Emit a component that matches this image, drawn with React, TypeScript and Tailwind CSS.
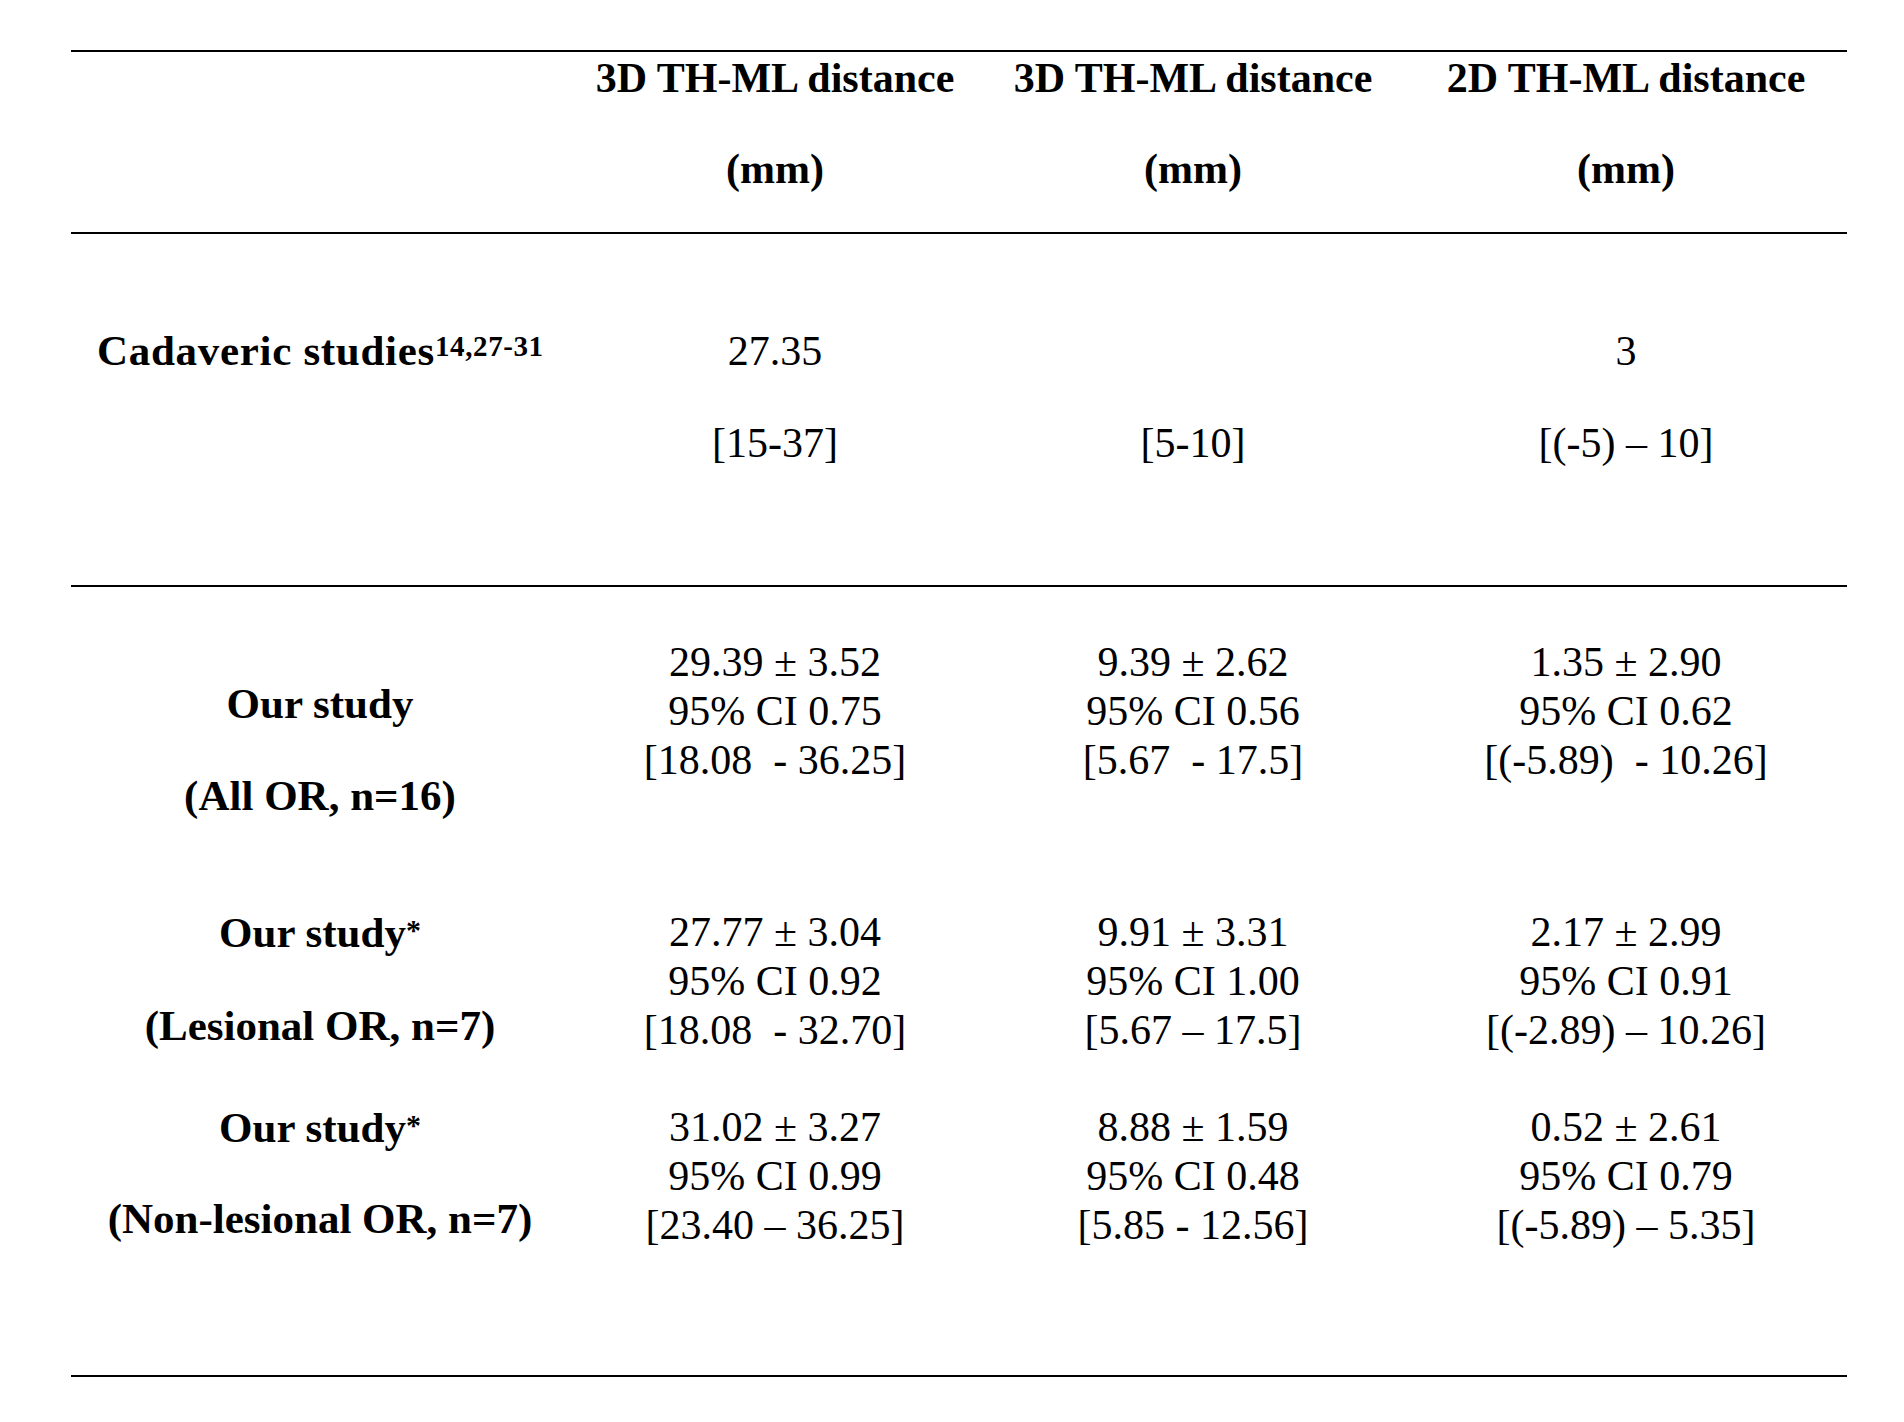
import React from "react";

const headers = ["3D TH-ML distance", "3D TH-ML distance", "2D TH-ML distance"];

type BodyRow = {
  label: string;
  star: boolean;
  sub: string;
  h: string;
  pt: string;
  labelPt: string;
  labelGap: string;
  cells: string[][];
};

const bodyRows: BodyRow[] = [
  {
    label: "Our study",
    star: false,
    sub: "(All OR, n=16)",
    h: "h-[283px]",
    pt: "pt-[51px]",
    labelPt: "pt-[92px]",
    labelGap: "gap-[43px]",
    cells: [
      ["29.39 ± 3.52", "95% CI 0.75", "[18.08  - 36.25]"],
      ["9.39 ± 2.62", "95% CI 0.56", "[5.67  - 17.5]"],
      ["1.35 ± 2.90", "95% CI 0.62", "[(-5.89)  - 10.26]"],
    ],
  },
  {
    label: "Our study",
    star: true,
    sub: "(Lesional OR, n=7)",
    h: "h-[195px]",
    pt: "pt-[38px]",
    labelPt: "pt-[38px]",
    labelGap: "gap-[44px]",
    cells: [
      ["27.77 ± 3.04", "95% CI 0.92", "[18.08  - 32.70]"],
      ["9.91 ± 3.31", "95% CI 1.00", "[5.67 – 17.5]"],
      ["2.17 ± 2.99", "95% CI 0.91", "[(-2.89) – 10.26]"],
    ],
  },
  {
    label: "Our study",
    star: true,
    sub: "(Non-lesional OR, n=7)",
    h: "h-[310px]",
    pt: "pt-[38px]",
    labelPt: "pt-[38px]",
    labelGap: "gap-[42px]",
    cells: [
      ["31.02 ± 3.27", "95% CI 0.99", "[23.40 – 36.25]"],
      ["8.88 ± 1.59", "95% CI 0.48", "[5.85 - 12.56]"],
      ["0.52 ± 2.61", "95% CI 0.79", "[(-5.89) – 5.35]"],
    ],
  },
];

const cols = "grid grid-cols-[498px_412px_424px_442px]";

export default function App() {
  return (
    <div className="bg-white w-[1904px] min-h-[1422px] pt-[50px] font-['Liberation_Serif',serif] text-black">
      <div className="ml-[71px] w-[1776px] border-t-2 border-black">
        {/* Header */}
        <div className={`${cols} h-[182px] border-b-2 border-black`}>
          <div />
          {headers.map((h, i) => (
            <div
              key={i}
              className="flex flex-col items-center pt-[2px] gap-[43px] font-bold text-[42px] leading-[48px] whitespace-nowrap"
            >
              <div>{h}</div>
              <div>(mm)</div>
            </div>
          ))}
        </div>

        {/* Cadaveric studies */}
        <div className={`${cols} h-[353px] border-b-2 border-black`}>
          <div className="pt-[93px] pl-[26px] font-bold text-[43px] leading-[48px] whitespace-nowrap">
            <span className="tracking-[0.7px]">Cadaveric studies</span>
            <span className="text-[29px] tracking-[0.6px] leading-none align-[9px]">14,27-31</span>
          </div>
          <div className="flex flex-col items-center pt-[93px] gap-[44px] text-[42px] leading-[48px]">
            <div>27.35</div>
            <div>[15-37]</div>
          </div>
          <div className="flex flex-col items-center pt-[93px] gap-[44px] text-[42px] leading-[48px]">
            <div className="h-[48px]" />
            <div>[5-10]</div>
          </div>
          <div className="flex flex-col items-center pt-[93px] gap-[44px] text-[42px] leading-[48px]">
            <div>3</div>
            <div>[(-5) – 10]</div>
          </div>
        </div>

        {/* Our study rows */}
        <div className="border-b-2 border-black">
          {bodyRows.map((r, i) => (
            <div key={i} className={`${cols} ${r.h}`}>
              <div
                className={`flex flex-col items-center ${r.labelPt} ${r.labelGap} font-bold text-[43px] leading-[49px] whitespace-nowrap`}
              >
                <div>
                  {r.label}
                  {r.star && <span className="text-[30px] leading-none align-[7px]">*</span>}
                </div>
                <div>{r.sub}</div>
              </div>
              {r.cells.map((c, j) => (
                <div
                  key={j}
                  className={`flex flex-col items-center ${r.pt} text-[42px] leading-[49px] whitespace-pre`}
                >
                  {c.map((t, k) => (
                    <div key={k}>{t}</div>
                  ))}
                </div>
              ))}
            </div>
          ))}
        </div>
      </div>
    </div>
  );
}
